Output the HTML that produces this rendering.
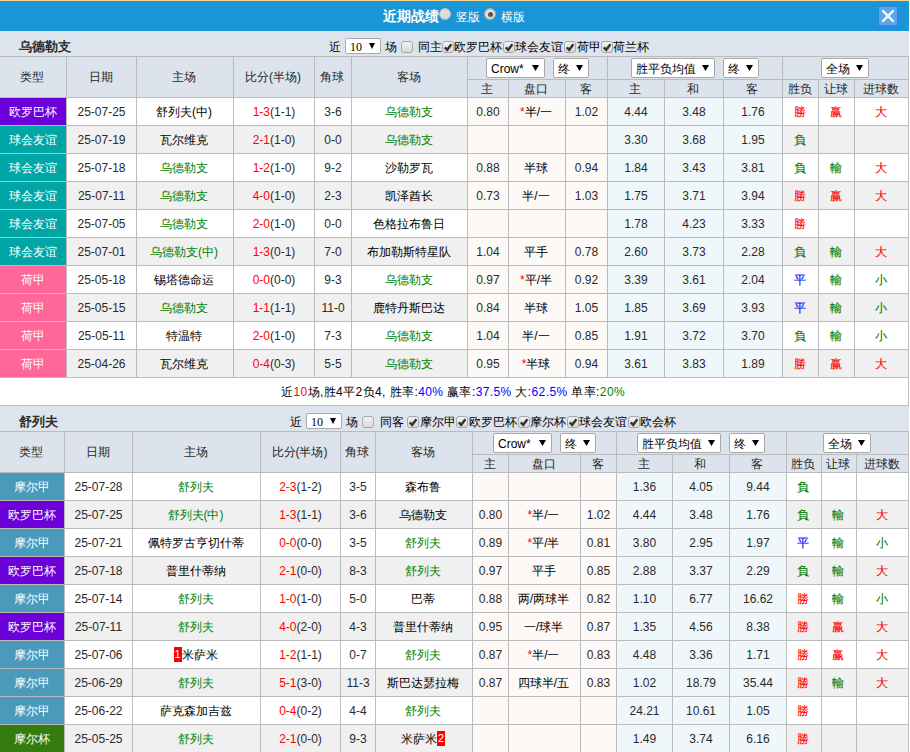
<!DOCTYPE html><html><head><meta charset="utf-8"><style>
*{margin:0;padding:0;box-sizing:border-box}
html,body{width:910px;height:752px;overflow:hidden;background:#fff}
body{position:relative;font-family:"Liberation Sans",sans-serif;font-size:12px;color:#000000}
body>div,body>svg{position:absolute}
.c{text-align:center;white-space:nowrap;overflow:visible}
.t{white-space:nowrap}
.sel{border:1px solid #a9a9a9;border-radius:2px;background:#fff;white-space:nowrap;color:#000;font-size:12px}
.sel .sl{position:absolute;left:4px;top:1px}
.sel .ar{position:absolute;right:5px;top:6px}
.cb{width:12px;height:12px;border:1px solid #a8a8a8;border-radius:3px;background:linear-gradient(#f2f2f2,#dadada)}
.sel.sm{font-family:'Liberation Serif',serif;font-size:12px}
.sel.sm .sl{left:4px;top:1px}
.sel.sm .ar{right:5px;top:4px}
.cb svg{position:absolute;left:0;top:0}
.rad{width:12px;height:12px;border-radius:50%;background:#dcdcdc;border:1px solid #b8b8b8}
.rad.on{background:#e4e4e4;border:1px solid #aaa;box-shadow:inset 0 0 0 1px #c8c8c8}
.rad.on div{position:absolute;left:2.5px;top:2.5px;width:5px;height:5px;border-radius:50%;background:#555}
.r{color:#ff0000} .g{color:#008000} .b{color:#0000ff}
.res{-webkit-text-stroke:0.12px currentColor}
.nb{display:inline-block;background:#f00;color:#fff;width:8px;text-align:center;height:15px;line-height:15px;vertical-align:1px;font-size:11px}
</style></head><body><div style="left:0px;top:0px;width:909px;height:1px;background:#fbd494;"></div>
<div style="left:0px;top:1px;width:909px;height:30px;background:#1a95d5;"></div>
<div class="t" style="left:383px;top:1px;height:30px;line-height:30px;color:#fff;font-weight:bold;font-size:14px;">近期战绩</div>
<div class="rad" style="left:439px;top:8px;"></div>
<div class="t" style="left:456px;top:2px;height:30px;line-height:30px;color:#fff;font-size:12px;">竖版</div>
<div class="rad on" style="left:484px;top:8px;"><div></div></div>
<div class="t" style="left:501px;top:2px;height:30px;line-height:30px;color:#fff;font-size:12px;">横版</div>
<div style="left:877px;top:5px;width:22px;height:22px;background:#2a8be6;"></div>
<div style="left:879px;top:7px;width:18px;height:18px;background:#5aa8ea;"></div>
<svg style="position:absolute;left:877px;top:5px" width="22" height="22" viewBox="0 0 22 22"><path d="M6 6 L16 16 M16 6 L6 16" stroke="#fff" stroke-width="2.2" stroke-linecap="round"/></svg>
<div style="left:0px;top:31px;width:909px;height:25px;background:#dde4ed;"></div>
<div class="t" style="left:19px;top:34px;height:25px;line-height:25px;font-weight:bold;font-size:13px;color:#2b2b2b;">乌德勒支</div>
<div class="t" style="left:329px;top:35px;height:25px;line-height:25px;">近</div>
<div class="sel sm" style="left:345px;top:38px;width:36px;height:16px;line-height:14px;"><span class="sl">10</span><svg class="ar" width="6" height="6" viewBox="0 0 6 6"><path d="M0 0H6L3 6Z" fill="#000"/></svg></div>
<div class="t" style="left:385px;top:35px;height:25px;line-height:25px;">场</div>
<div class="cb" style="left:401px;top:41px;"></div>
<div class="t" style="left:418px;top:35px;height:25px;line-height:25px;">同主</div>
<div class="cb" style="left:442px;top:41px;"><svg width="10" height="10" viewBox="0 0 10 10"><path d="M1.8 5.4 L4.2 7.8 L8.4 2.2" stroke="#333" stroke-width="2.4" fill="none"/></svg></div>
<div class="t" style="left:454px;top:35px;height:25px;line-height:25px;">欧罗巴杯</div>
<div class="cb" style="left:503px;top:41px;"><svg width="10" height="10" viewBox="0 0 10 10"><path d="M1.8 5.4 L4.2 7.8 L8.4 2.2" stroke="#333" stroke-width="2.4" fill="none"/></svg></div>
<div class="t" style="left:515px;top:35px;height:25px;line-height:25px;">球会友谊</div>
<div class="cb" style="left:564px;top:41px;"><svg width="10" height="10" viewBox="0 0 10 10"><path d="M1.8 5.4 L4.2 7.8 L8.4 2.2" stroke="#333" stroke-width="2.4" fill="none"/></svg></div>
<div class="t" style="left:577px;top:35px;height:25px;line-height:25px;">荷甲</div>
<div class="cb" style="left:601px;top:41px;"><svg width="10" height="10" viewBox="0 0 10 10"><path d="M1.8 5.4 L4.2 7.8 L8.4 2.2" stroke="#333" stroke-width="2.4" fill="none"/></svg></div>
<div class="t" style="left:613px;top:35px;height:25px;line-height:25px;">荷兰杯</div>
<div style="left:0px;top:56px;width:909px;height:41px;background:#dce3ec;"></div>
<div style="left:0px;top:56px;width:909px;height:1px;background:#bbbbbb;"></div>
<div style="left:0px;top:97px;width:909px;height:1px;background:#bbbbbb;"></div>
<div style="left:467px;top:79px;width:442px;height:1px;background:#bbbbbb;"></div>
<div style="left:66px;top:56px;width:1px;height:42px;background:#bbbbbb;"></div>
<div style="left:136px;top:56px;width:1px;height:42px;background:#bbbbbb;"></div>
<div style="left:233px;top:56px;width:1px;height:42px;background:#bbbbbb;"></div>
<div style="left:314px;top:56px;width:1px;height:42px;background:#bbbbbb;"></div>
<div style="left:351px;top:56px;width:1px;height:42px;background:#bbbbbb;"></div>
<div style="left:467px;top:56px;width:1px;height:42px;background:#bbbbbb;"></div>
<div style="left:508px;top:79px;width:1px;height:19px;background:#bbbbbb;"></div>
<div style="left:565px;top:79px;width:1px;height:19px;background:#bbbbbb;"></div>
<div style="left:607px;top:56px;width:1px;height:42px;background:#bbbbbb;"></div>
<div style="left:664px;top:79px;width:1px;height:19px;background:#bbbbbb;"></div>
<div style="left:723px;top:79px;width:1px;height:19px;background:#bbbbbb;"></div>
<div style="left:782px;top:56px;width:1px;height:42px;background:#bbbbbb;"></div>
<div style="left:818px;top:79px;width:1px;height:19px;background:#bbbbbb;"></div>
<div style="left:854px;top:79px;width:1px;height:19px;background:#bbbbbb;"></div>
<div style="left:908px;top:56px;width:1px;height:42px;background:#bbbbbb;"></div>
<div class="c" style="left:-1px;top:57px;width:66px;height:40px;line-height:40px;color:#262626;">类型</div>
<div class="c" style="left:66px;top:57px;width:69px;height:40px;line-height:40px;color:#262626;">日期</div>
<div class="c" style="left:136px;top:57px;width:96px;height:40px;line-height:40px;color:#262626;">主场</div>
<div class="c" style="left:233px;top:57px;width:80px;height:40px;line-height:40px;color:#262626;">比分(半场)</div>
<div class="c" style="left:314px;top:57px;width:36px;height:40px;line-height:40px;color:#262626;">角球</div>
<div class="c" style="left:351px;top:57px;width:115px;height:40px;line-height:40px;color:#262626;">客场</div>
<div class="c" style="left:467px;top:81px;width:40px;height:17px;line-height:17px;color:#262626;">主</div>
<div class="c" style="left:508px;top:81px;width:56px;height:17px;line-height:17px;color:#262626;">盘口</div>
<div class="c" style="left:565px;top:81px;width:41px;height:17px;line-height:17px;color:#262626;">客</div>
<div class="c" style="left:607px;top:81px;width:56px;height:17px;line-height:17px;color:#262626;">主</div>
<div class="c" style="left:664px;top:81px;width:58px;height:17px;line-height:17px;color:#262626;">和</div>
<div class="c" style="left:723px;top:81px;width:58px;height:17px;line-height:17px;color:#262626;">客</div>
<div class="c" style="left:782px;top:81px;width:35px;height:17px;line-height:17px;color:#262626;">胜负</div>
<div class="c" style="left:818px;top:81px;width:35px;height:17px;line-height:17px;color:#262626;">让球</div>
<div class="c" style="left:854px;top:81px;width:53px;height:17px;line-height:17px;color:#262626;">进球数</div>
<div class="sel" style="left:486px;top:58px;width:59px;height:20px;line-height:18px;"><span class="sl">Crow*</span><svg class="ar" width="7" height="6" viewBox="0 0 7 6"><path d="M0 0H7L3.5 6Z" fill="#000"/></svg></div>
<div class="sel" style="left:553px;top:58px;width:36px;height:20px;line-height:18px;"><span class="sl">终</span><svg class="ar" width="7" height="6" viewBox="0 0 7 6"><path d="M0 0H7L3.5 6Z" fill="#000"/></svg></div>
<div class="sel" style="left:631px;top:58px;width:84px;height:20px;line-height:18px;"><span class="sl">胜平负均值</span><svg class="ar" width="7" height="6" viewBox="0 0 7 6"><path d="M0 0H7L3.5 6Z" fill="#000"/></svg></div>
<div class="sel" style="left:723px;top:58px;width:36px;height:20px;line-height:18px;"><span class="sl">终</span><svg class="ar" width="7" height="6" viewBox="0 0 7 6"><path d="M0 0H7L3.5 6Z" fill="#000"/></svg></div>
<div class="sel" style="left:821px;top:58px;width:48px;height:20px;line-height:18px;"><span class="sl">全场</span><svg class="ar" width="7" height="6" viewBox="0 0 7 6"><path d="M0 0H7L3.5 6Z" fill="#000"/></svg></div>
<div style="left:0px;top:98px;width:909px;height:27px;background:#ffffff;"></div>
<div style="left:468px;top:98px;width:140px;height:27px;background:#fdf9f6;"></div>
<div style="left:608px;top:98px;width:175px;height:27px;background:#f0f7fb;"></div>
<div style="left:0px;top:98px;width:66px;height:27px;background:#6c00d8;"></div>
<div class="c" style="left:0px;top:99px;width:66px;height:27px;line-height:27px;color:#fff;">欧罗巴杯</div>
<div class="c" style="left:67px;top:99px;width:69px;height:27px;line-height:27px;color:#2a2a2a;">25-07-25</div>
<div class="c" style="left:136px;top:99px;width:96px;height:27px;line-height:27px;color:#000000;">舒列夫(中)</div>
<div class="c" style="left:234px;top:99px;width:80px;height:27px;line-height:27px;color:#2a2a2a;"><span class="r">1-3</span>(1-1)</div>
<div class="c" style="left:315px;top:99px;width:36px;height:27px;line-height:27px;color:#2a2a2a;">3-6</div>
<div class="c" style="left:351px;top:99px;width:115px;height:27px;line-height:27px;color:#000000;"><span class="g">乌德勒支</span></div>
<div class="c" style="left:468px;top:99px;width:40px;height:27px;line-height:27px;color:#2a2a2a;">0.80</div>
<div class="c" style="left:508px;top:99px;width:56px;height:27px;line-height:27px;color:#000000;"><span class="r">*</span>半/一</div>
<div class="c" style="left:566px;top:99px;width:41px;height:27px;line-height:27px;color:#2a2a2a;">1.02</div>
<div class="c" style="left:608px;top:99px;width:56px;height:27px;line-height:27px;color:#2a2a2a;">4.44</div>
<div class="c" style="left:665px;top:99px;width:58px;height:27px;line-height:27px;color:#2a2a2a;">3.48</div>
<div class="c" style="left:724px;top:99px;width:58px;height:27px;line-height:27px;color:#2a2a2a;">1.76</div>
<div class="c" style="left:782px;top:99px;width:35px;height:27px;line-height:27px;color:#000000;"><span class="r res">勝</span></div>
<div class="c" style="left:818px;top:99px;width:35px;height:27px;line-height:27px;color:#000000;"><span class="r res">赢</span></div>
<div class="c" style="left:854px;top:99px;width:53px;height:27px;line-height:27px;color:#000000;"><span class="r res">大</span></div>
<div style="left:0px;top:125px;width:909px;height:1px;background:#bbbbbb;"></div>
<div style="left:0px;top:126px;width:909px;height:27px;background:#f0f0f0;"></div>
<div style="left:468px;top:126px;width:140px;height:27px;background:#fdf9f6;"></div>
<div style="left:608px;top:126px;width:175px;height:27px;background:#f0f7fb;"></div>
<div style="left:0px;top:126px;width:66px;height:27px;background:#00a6a6;"></div>
<div class="c" style="left:0px;top:127px;width:66px;height:27px;line-height:27px;color:#fff;">球会友谊</div>
<div class="c" style="left:67px;top:127px;width:69px;height:27px;line-height:27px;color:#2a2a2a;">25-07-19</div>
<div class="c" style="left:136px;top:127px;width:96px;height:27px;line-height:27px;color:#000000;">瓦尔维克</div>
<div class="c" style="left:234px;top:127px;width:80px;height:27px;line-height:27px;color:#2a2a2a;"><span class="r">2-1</span>(1-0)</div>
<div class="c" style="left:315px;top:127px;width:36px;height:27px;line-height:27px;color:#2a2a2a;">0-0</div>
<div class="c" style="left:351px;top:127px;width:115px;height:27px;line-height:27px;color:#000000;"><span class="g">乌德勒支</span></div>
<div class="c" style="left:608px;top:127px;width:56px;height:27px;line-height:27px;color:#2a2a2a;">3.30</div>
<div class="c" style="left:665px;top:127px;width:58px;height:27px;line-height:27px;color:#2a2a2a;">3.68</div>
<div class="c" style="left:724px;top:127px;width:58px;height:27px;line-height:27px;color:#2a2a2a;">1.95</div>
<div class="c" style="left:782px;top:127px;width:35px;height:27px;line-height:27px;color:#000000;"><span class="g res">負</span></div>
<div style="left:0px;top:153px;width:909px;height:1px;background:#bbbbbb;"></div>
<div style="left:0px;top:154px;width:909px;height:27px;background:#ffffff;"></div>
<div style="left:468px;top:154px;width:140px;height:27px;background:#fdf9f6;"></div>
<div style="left:608px;top:154px;width:175px;height:27px;background:#f0f7fb;"></div>
<div style="left:0px;top:154px;width:66px;height:27px;background:#00a6a6;"></div>
<div class="c" style="left:0px;top:155px;width:66px;height:27px;line-height:27px;color:#fff;">球会友谊</div>
<div class="c" style="left:67px;top:155px;width:69px;height:27px;line-height:27px;color:#2a2a2a;">25-07-18</div>
<div class="c" style="left:136px;top:155px;width:96px;height:27px;line-height:27px;color:#000000;"><span class="g">乌德勒支</span></div>
<div class="c" style="left:234px;top:155px;width:80px;height:27px;line-height:27px;color:#2a2a2a;"><span class="r">1-2</span>(1-0)</div>
<div class="c" style="left:315px;top:155px;width:36px;height:27px;line-height:27px;color:#2a2a2a;">9-2</div>
<div class="c" style="left:351px;top:155px;width:115px;height:27px;line-height:27px;color:#000000;">沙勒罗瓦</div>
<div class="c" style="left:468px;top:155px;width:40px;height:27px;line-height:27px;color:#2a2a2a;">0.88</div>
<div class="c" style="left:508px;top:155px;width:56px;height:27px;line-height:27px;color:#000000;">半球</div>
<div class="c" style="left:566px;top:155px;width:41px;height:27px;line-height:27px;color:#2a2a2a;">0.94</div>
<div class="c" style="left:608px;top:155px;width:56px;height:27px;line-height:27px;color:#2a2a2a;">1.84</div>
<div class="c" style="left:665px;top:155px;width:58px;height:27px;line-height:27px;color:#2a2a2a;">3.43</div>
<div class="c" style="left:724px;top:155px;width:58px;height:27px;line-height:27px;color:#2a2a2a;">3.81</div>
<div class="c" style="left:782px;top:155px;width:35px;height:27px;line-height:27px;color:#000000;"><span class="g res">負</span></div>
<div class="c" style="left:818px;top:155px;width:35px;height:27px;line-height:27px;color:#000000;"><span class="g res">輸</span></div>
<div class="c" style="left:854px;top:155px;width:53px;height:27px;line-height:27px;color:#000000;"><span class="r res">大</span></div>
<div style="left:0px;top:181px;width:909px;height:1px;background:#bbbbbb;"></div>
<div style="left:0px;top:182px;width:909px;height:27px;background:#f0f0f0;"></div>
<div style="left:468px;top:182px;width:140px;height:27px;background:#fdf9f6;"></div>
<div style="left:608px;top:182px;width:175px;height:27px;background:#f0f7fb;"></div>
<div style="left:0px;top:182px;width:66px;height:27px;background:#00a6a6;"></div>
<div class="c" style="left:0px;top:183px;width:66px;height:27px;line-height:27px;color:#fff;">球会友谊</div>
<div class="c" style="left:67px;top:183px;width:69px;height:27px;line-height:27px;color:#2a2a2a;">25-07-11</div>
<div class="c" style="left:136px;top:183px;width:96px;height:27px;line-height:27px;color:#000000;"><span class="g">乌德勒支</span></div>
<div class="c" style="left:234px;top:183px;width:80px;height:27px;line-height:27px;color:#2a2a2a;"><span class="r">4-0</span>(1-0)</div>
<div class="c" style="left:315px;top:183px;width:36px;height:27px;line-height:27px;color:#2a2a2a;">2-3</div>
<div class="c" style="left:351px;top:183px;width:115px;height:27px;line-height:27px;color:#000000;">凯泽酋长</div>
<div class="c" style="left:468px;top:183px;width:40px;height:27px;line-height:27px;color:#2a2a2a;">0.73</div>
<div class="c" style="left:508px;top:183px;width:56px;height:27px;line-height:27px;color:#000000;">半/一</div>
<div class="c" style="left:566px;top:183px;width:41px;height:27px;line-height:27px;color:#2a2a2a;">1.03</div>
<div class="c" style="left:608px;top:183px;width:56px;height:27px;line-height:27px;color:#2a2a2a;">1.75</div>
<div class="c" style="left:665px;top:183px;width:58px;height:27px;line-height:27px;color:#2a2a2a;">3.71</div>
<div class="c" style="left:724px;top:183px;width:58px;height:27px;line-height:27px;color:#2a2a2a;">3.94</div>
<div class="c" style="left:782px;top:183px;width:35px;height:27px;line-height:27px;color:#000000;"><span class="r res">勝</span></div>
<div class="c" style="left:818px;top:183px;width:35px;height:27px;line-height:27px;color:#000000;"><span class="r res">赢</span></div>
<div class="c" style="left:854px;top:183px;width:53px;height:27px;line-height:27px;color:#000000;"><span class="r res">大</span></div>
<div style="left:0px;top:209px;width:909px;height:1px;background:#bbbbbb;"></div>
<div style="left:0px;top:210px;width:909px;height:27px;background:#ffffff;"></div>
<div style="left:468px;top:210px;width:140px;height:27px;background:#fdf9f6;"></div>
<div style="left:608px;top:210px;width:175px;height:27px;background:#f0f7fb;"></div>
<div style="left:0px;top:210px;width:66px;height:27px;background:#00a6a6;"></div>
<div class="c" style="left:0px;top:211px;width:66px;height:27px;line-height:27px;color:#fff;">球会友谊</div>
<div class="c" style="left:67px;top:211px;width:69px;height:27px;line-height:27px;color:#2a2a2a;">25-07-05</div>
<div class="c" style="left:136px;top:211px;width:96px;height:27px;line-height:27px;color:#000000;"><span class="g">乌德勒支</span></div>
<div class="c" style="left:234px;top:211px;width:80px;height:27px;line-height:27px;color:#2a2a2a;"><span class="r">2-0</span>(1-0)</div>
<div class="c" style="left:315px;top:211px;width:36px;height:27px;line-height:27px;color:#2a2a2a;">0-0</div>
<div class="c" style="left:351px;top:211px;width:115px;height:27px;line-height:27px;color:#000000;">色格拉布鲁日</div>
<div class="c" style="left:608px;top:211px;width:56px;height:27px;line-height:27px;color:#2a2a2a;">1.78</div>
<div class="c" style="left:665px;top:211px;width:58px;height:27px;line-height:27px;color:#2a2a2a;">4.23</div>
<div class="c" style="left:724px;top:211px;width:58px;height:27px;line-height:27px;color:#2a2a2a;">3.33</div>
<div class="c" style="left:782px;top:211px;width:35px;height:27px;line-height:27px;color:#000000;"><span class="r res">勝</span></div>
<div style="left:0px;top:237px;width:909px;height:1px;background:#bbbbbb;"></div>
<div style="left:0px;top:238px;width:909px;height:27px;background:#f0f0f0;"></div>
<div style="left:468px;top:238px;width:140px;height:27px;background:#fdf9f6;"></div>
<div style="left:608px;top:238px;width:175px;height:27px;background:#f0f7fb;"></div>
<div style="left:0px;top:238px;width:66px;height:27px;background:#00a6a6;"></div>
<div class="c" style="left:0px;top:239px;width:66px;height:27px;line-height:27px;color:#fff;">球会友谊</div>
<div class="c" style="left:67px;top:239px;width:69px;height:27px;line-height:27px;color:#2a2a2a;">25-07-01</div>
<div class="c" style="left:136px;top:239px;width:96px;height:27px;line-height:27px;color:#000000;"><span class="g">乌德勒支(中)</span></div>
<div class="c" style="left:234px;top:239px;width:80px;height:27px;line-height:27px;color:#2a2a2a;"><span class="r">1-3</span>(0-1)</div>
<div class="c" style="left:315px;top:239px;width:36px;height:27px;line-height:27px;color:#2a2a2a;">7-0</div>
<div class="c" style="left:351px;top:239px;width:115px;height:27px;line-height:27px;color:#000000;">布加勒斯特星队</div>
<div class="c" style="left:468px;top:239px;width:40px;height:27px;line-height:27px;color:#2a2a2a;">1.04</div>
<div class="c" style="left:508px;top:239px;width:56px;height:27px;line-height:27px;color:#000000;">平手</div>
<div class="c" style="left:566px;top:239px;width:41px;height:27px;line-height:27px;color:#2a2a2a;">0.78</div>
<div class="c" style="left:608px;top:239px;width:56px;height:27px;line-height:27px;color:#2a2a2a;">2.60</div>
<div class="c" style="left:665px;top:239px;width:58px;height:27px;line-height:27px;color:#2a2a2a;">3.73</div>
<div class="c" style="left:724px;top:239px;width:58px;height:27px;line-height:27px;color:#2a2a2a;">2.28</div>
<div class="c" style="left:782px;top:239px;width:35px;height:27px;line-height:27px;color:#000000;"><span class="g res">負</span></div>
<div class="c" style="left:818px;top:239px;width:35px;height:27px;line-height:27px;color:#000000;"><span class="g res">輸</span></div>
<div class="c" style="left:854px;top:239px;width:53px;height:27px;line-height:27px;color:#000000;"><span class="r res">大</span></div>
<div style="left:0px;top:265px;width:909px;height:1px;background:#bbbbbb;"></div>
<div style="left:0px;top:266px;width:909px;height:27px;background:#ffffff;"></div>
<div style="left:468px;top:266px;width:140px;height:27px;background:#fdf9f6;"></div>
<div style="left:608px;top:266px;width:175px;height:27px;background:#f0f7fb;"></div>
<div style="left:0px;top:266px;width:66px;height:27px;background:#ff6699;"></div>
<div class="c" style="left:0px;top:267px;width:66px;height:27px;line-height:27px;color:#fff;">荷甲</div>
<div class="c" style="left:67px;top:267px;width:69px;height:27px;line-height:27px;color:#2a2a2a;">25-05-18</div>
<div class="c" style="left:136px;top:267px;width:96px;height:27px;line-height:27px;color:#000000;">锡塔德命运</div>
<div class="c" style="left:234px;top:267px;width:80px;height:27px;line-height:27px;color:#2a2a2a;"><span class="r">0-0</span>(0-0)</div>
<div class="c" style="left:315px;top:267px;width:36px;height:27px;line-height:27px;color:#2a2a2a;">9-3</div>
<div class="c" style="left:351px;top:267px;width:115px;height:27px;line-height:27px;color:#000000;"><span class="g">乌德勒支</span></div>
<div class="c" style="left:468px;top:267px;width:40px;height:27px;line-height:27px;color:#2a2a2a;">0.97</div>
<div class="c" style="left:508px;top:267px;width:56px;height:27px;line-height:27px;color:#000000;"><span class="r">*</span>平/半</div>
<div class="c" style="left:566px;top:267px;width:41px;height:27px;line-height:27px;color:#2a2a2a;">0.92</div>
<div class="c" style="left:608px;top:267px;width:56px;height:27px;line-height:27px;color:#2a2a2a;">3.39</div>
<div class="c" style="left:665px;top:267px;width:58px;height:27px;line-height:27px;color:#2a2a2a;">3.61</div>
<div class="c" style="left:724px;top:267px;width:58px;height:27px;line-height:27px;color:#2a2a2a;">2.04</div>
<div class="c" style="left:782px;top:267px;width:35px;height:27px;line-height:27px;color:#000000;"><span class="b res">平</span></div>
<div class="c" style="left:818px;top:267px;width:35px;height:27px;line-height:27px;color:#000000;"><span class="g res">輸</span></div>
<div class="c" style="left:854px;top:267px;width:53px;height:27px;line-height:27px;color:#000000;"><span class="g res">小</span></div>
<div style="left:0px;top:293px;width:909px;height:1px;background:#bbbbbb;"></div>
<div style="left:0px;top:294px;width:909px;height:27px;background:#f0f0f0;"></div>
<div style="left:468px;top:294px;width:140px;height:27px;background:#fdf9f6;"></div>
<div style="left:608px;top:294px;width:175px;height:27px;background:#f0f7fb;"></div>
<div style="left:0px;top:294px;width:66px;height:27px;background:#ff6699;"></div>
<div class="c" style="left:0px;top:295px;width:66px;height:27px;line-height:27px;color:#fff;">荷甲</div>
<div class="c" style="left:67px;top:295px;width:69px;height:27px;line-height:27px;color:#2a2a2a;">25-05-15</div>
<div class="c" style="left:136px;top:295px;width:96px;height:27px;line-height:27px;color:#000000;"><span class="g">乌德勒支</span></div>
<div class="c" style="left:234px;top:295px;width:80px;height:27px;line-height:27px;color:#2a2a2a;"><span class="r">1-1</span>(1-1)</div>
<div class="c" style="left:315px;top:295px;width:36px;height:27px;line-height:27px;color:#2a2a2a;">11-0</div>
<div class="c" style="left:351px;top:295px;width:115px;height:27px;line-height:27px;color:#000000;">鹿特丹斯巴达</div>
<div class="c" style="left:468px;top:295px;width:40px;height:27px;line-height:27px;color:#2a2a2a;">0.84</div>
<div class="c" style="left:508px;top:295px;width:56px;height:27px;line-height:27px;color:#000000;">半球</div>
<div class="c" style="left:566px;top:295px;width:41px;height:27px;line-height:27px;color:#2a2a2a;">1.05</div>
<div class="c" style="left:608px;top:295px;width:56px;height:27px;line-height:27px;color:#2a2a2a;">1.85</div>
<div class="c" style="left:665px;top:295px;width:58px;height:27px;line-height:27px;color:#2a2a2a;">3.69</div>
<div class="c" style="left:724px;top:295px;width:58px;height:27px;line-height:27px;color:#2a2a2a;">3.93</div>
<div class="c" style="left:782px;top:295px;width:35px;height:27px;line-height:27px;color:#000000;"><span class="b res">平</span></div>
<div class="c" style="left:818px;top:295px;width:35px;height:27px;line-height:27px;color:#000000;"><span class="g res">輸</span></div>
<div class="c" style="left:854px;top:295px;width:53px;height:27px;line-height:27px;color:#000000;"><span class="g res">小</span></div>
<div style="left:0px;top:321px;width:909px;height:1px;background:#bbbbbb;"></div>
<div style="left:0px;top:322px;width:909px;height:27px;background:#ffffff;"></div>
<div style="left:468px;top:322px;width:140px;height:27px;background:#fdf9f6;"></div>
<div style="left:608px;top:322px;width:175px;height:27px;background:#f0f7fb;"></div>
<div style="left:0px;top:322px;width:66px;height:27px;background:#ff6699;"></div>
<div class="c" style="left:0px;top:323px;width:66px;height:27px;line-height:27px;color:#fff;">荷甲</div>
<div class="c" style="left:67px;top:323px;width:69px;height:27px;line-height:27px;color:#2a2a2a;">25-05-11</div>
<div class="c" style="left:136px;top:323px;width:96px;height:27px;line-height:27px;color:#000000;">特温特</div>
<div class="c" style="left:234px;top:323px;width:80px;height:27px;line-height:27px;color:#2a2a2a;"><span class="r">2-0</span>(1-0)</div>
<div class="c" style="left:315px;top:323px;width:36px;height:27px;line-height:27px;color:#2a2a2a;">7-3</div>
<div class="c" style="left:351px;top:323px;width:115px;height:27px;line-height:27px;color:#000000;"><span class="g">乌德勒支</span></div>
<div class="c" style="left:468px;top:323px;width:40px;height:27px;line-height:27px;color:#2a2a2a;">1.04</div>
<div class="c" style="left:508px;top:323px;width:56px;height:27px;line-height:27px;color:#000000;">半/一</div>
<div class="c" style="left:566px;top:323px;width:41px;height:27px;line-height:27px;color:#2a2a2a;">0.85</div>
<div class="c" style="left:608px;top:323px;width:56px;height:27px;line-height:27px;color:#2a2a2a;">1.91</div>
<div class="c" style="left:665px;top:323px;width:58px;height:27px;line-height:27px;color:#2a2a2a;">3.72</div>
<div class="c" style="left:724px;top:323px;width:58px;height:27px;line-height:27px;color:#2a2a2a;">3.70</div>
<div class="c" style="left:782px;top:323px;width:35px;height:27px;line-height:27px;color:#000000;"><span class="g res">負</span></div>
<div class="c" style="left:818px;top:323px;width:35px;height:27px;line-height:27px;color:#000000;"><span class="g res">輸</span></div>
<div class="c" style="left:854px;top:323px;width:53px;height:27px;line-height:27px;color:#000000;"><span class="g res">小</span></div>
<div style="left:0px;top:349px;width:909px;height:1px;background:#bbbbbb;"></div>
<div style="left:0px;top:350px;width:909px;height:27px;background:#f0f0f0;"></div>
<div style="left:468px;top:350px;width:140px;height:27px;background:#fdf9f6;"></div>
<div style="left:608px;top:350px;width:175px;height:27px;background:#f0f7fb;"></div>
<div style="left:0px;top:350px;width:66px;height:27px;background:#ff6699;"></div>
<div class="c" style="left:0px;top:351px;width:66px;height:27px;line-height:27px;color:#fff;">荷甲</div>
<div class="c" style="left:67px;top:351px;width:69px;height:27px;line-height:27px;color:#2a2a2a;">25-04-26</div>
<div class="c" style="left:136px;top:351px;width:96px;height:27px;line-height:27px;color:#000000;">瓦尔维克</div>
<div class="c" style="left:234px;top:351px;width:80px;height:27px;line-height:27px;color:#2a2a2a;"><span class="r">0-4</span>(0-3)</div>
<div class="c" style="left:315px;top:351px;width:36px;height:27px;line-height:27px;color:#2a2a2a;">5-5</div>
<div class="c" style="left:351px;top:351px;width:115px;height:27px;line-height:27px;color:#000000;"><span class="g">乌德勒支</span></div>
<div class="c" style="left:468px;top:351px;width:40px;height:27px;line-height:27px;color:#2a2a2a;">0.95</div>
<div class="c" style="left:508px;top:351px;width:56px;height:27px;line-height:27px;color:#000000;"><span class="r">*</span>半球</div>
<div class="c" style="left:566px;top:351px;width:41px;height:27px;line-height:27px;color:#2a2a2a;">0.94</div>
<div class="c" style="left:608px;top:351px;width:56px;height:27px;line-height:27px;color:#2a2a2a;">3.61</div>
<div class="c" style="left:665px;top:351px;width:58px;height:27px;line-height:27px;color:#2a2a2a;">3.83</div>
<div class="c" style="left:724px;top:351px;width:58px;height:27px;line-height:27px;color:#2a2a2a;">1.89</div>
<div class="c" style="left:782px;top:351px;width:35px;height:27px;line-height:27px;color:#000000;"><span class="r res">勝</span></div>
<div class="c" style="left:818px;top:351px;width:35px;height:27px;line-height:27px;color:#000000;"><span class="r res">赢</span></div>
<div class="c" style="left:854px;top:351px;width:53px;height:27px;line-height:27px;color:#000000;"><span class="r res">大</span></div>
<div style="left:0px;top:377px;width:909px;height:1px;background:#bbbbbb;"></div>
<div style="left:66px;top:97px;width:1px;height:281px;background:#bbbbbb;"></div>
<div style="left:136px;top:97px;width:1px;height:281px;background:#bbbbbb;"></div>
<div style="left:233px;top:97px;width:1px;height:281px;background:#bbbbbb;"></div>
<div style="left:314px;top:97px;width:1px;height:281px;background:#bbbbbb;"></div>
<div style="left:351px;top:97px;width:1px;height:281px;background:#bbbbbb;"></div>
<div style="left:467px;top:97px;width:1px;height:281px;background:#bbbbbb;"></div>
<div style="left:508px;top:97px;width:1px;height:281px;background:#bbbbbb;"></div>
<div style="left:565px;top:97px;width:1px;height:281px;background:#bbbbbb;"></div>
<div style="left:607px;top:97px;width:1px;height:281px;background:#bbbbbb;"></div>
<div style="left:664px;top:97px;width:1px;height:281px;background:#bbbbbb;"></div>
<div style="left:723px;top:97px;width:1px;height:281px;background:#bbbbbb;"></div>
<div style="left:782px;top:97px;width:1px;height:281px;background:#bbbbbb;"></div>
<div style="left:818px;top:97px;width:1px;height:281px;background:#bbbbbb;"></div>
<div style="left:854px;top:97px;width:1px;height:281px;background:#bbbbbb;"></div>
<div style="left:908px;top:97px;width:1px;height:281px;background:#bbbbbb;"></div>
<div style="left:0px;top:378px;width:909px;height:27px;background:#fff;"></div>
<div class="t" style="left:281px;top:379px;height:27px;line-height:27px;"><span style="letter-spacing:0.4px">近<span class="r">10</span>场,胜4平2负4, 胜率:<span class="b">40%</span> 赢率:<span class="b">37.5%</span> 大:<span class="b">62.5%</span> 单率:<span class="g">20%</span></span></div>
<div style="left:908px;top:378px;width:1px;height:28px;background:#bbbbbb;"></div>
<div style="left:0px;top:405px;width:909px;height:1px;background:#bbbbbb;"></div>
<div style="left:0px;top:406px;width:909px;height:25px;background:#dde4ed;"></div>
<div class="t" style="left:19px;top:409px;height:25px;line-height:25px;font-weight:bold;font-size:13px;color:#2b2b2b;">舒列夫</div>
<div class="t" style="left:290px;top:410px;height:25px;line-height:25px;">近</div>
<div class="sel sm" style="left:306px;top:413px;width:36px;height:16px;line-height:14px;"><span class="sl">10</span><svg class="ar" width="6" height="6" viewBox="0 0 6 6"><path d="M0 0H6L3 6Z" fill="#000"/></svg></div>
<div class="t" style="left:346px;top:410px;height:25px;line-height:25px;">场</div>
<div class="cb" style="left:362px;top:416px;"></div>
<div class="t" style="left:380px;top:410px;height:25px;line-height:25px;">同客</div>
<div class="cb" style="left:407px;top:416px;"><svg width="10" height="10" viewBox="0 0 10 10"><path d="M1.8 5.4 L4.2 7.8 L8.4 2.2" stroke="#333" stroke-width="2.4" fill="none"/></svg></div>
<div class="t" style="left:420px;top:410px;height:25px;line-height:25px;">摩尔甲</div>
<div class="cb" style="left:456px;top:416px;"><svg width="10" height="10" viewBox="0 0 10 10"><path d="M1.8 5.4 L4.2 7.8 L8.4 2.2" stroke="#333" stroke-width="2.4" fill="none"/></svg></div>
<div class="t" style="left:469px;top:410px;height:25px;line-height:25px;">欧罗巴杯</div>
<div class="cb" style="left:518px;top:416px;"><svg width="10" height="10" viewBox="0 0 10 10"><path d="M1.8 5.4 L4.2 7.8 L8.4 2.2" stroke="#333" stroke-width="2.4" fill="none"/></svg></div>
<div class="t" style="left:530px;top:410px;height:25px;line-height:25px;">摩尔杯</div>
<div class="cb" style="left:567px;top:416px;"><svg width="10" height="10" viewBox="0 0 10 10"><path d="M1.8 5.4 L4.2 7.8 L8.4 2.2" stroke="#333" stroke-width="2.4" fill="none"/></svg></div>
<div class="t" style="left:579px;top:410px;height:25px;line-height:25px;">球会友谊</div>
<div class="cb" style="left:628px;top:416px;"><svg width="10" height="10" viewBox="0 0 10 10"><path d="M1.8 5.4 L4.2 7.8 L8.4 2.2" stroke="#333" stroke-width="2.4" fill="none"/></svg></div>
<div class="t" style="left:640px;top:410px;height:25px;line-height:25px;">欧会杯</div>
<div style="left:0px;top:431px;width:909px;height:41px;background:#dce3ec;"></div>
<div style="left:0px;top:431px;width:909px;height:1px;background:#bbbbbb;"></div>
<div style="left:0px;top:472px;width:909px;height:1px;background:#bbbbbb;"></div>
<div style="left:472px;top:454px;width:437px;height:1px;background:#bbbbbb;"></div>
<div style="left:64px;top:431px;width:1px;height:42px;background:#bbbbbb;"></div>
<div style="left:132px;top:431px;width:1px;height:42px;background:#bbbbbb;"></div>
<div style="left:260px;top:431px;width:1px;height:42px;background:#bbbbbb;"></div>
<div style="left:340px;top:431px;width:1px;height:42px;background:#bbbbbb;"></div>
<div style="left:375px;top:431px;width:1px;height:42px;background:#bbbbbb;"></div>
<div style="left:472px;top:431px;width:1px;height:42px;background:#bbbbbb;"></div>
<div style="left:508px;top:454px;width:1px;height:19px;background:#bbbbbb;"></div>
<div style="left:580px;top:454px;width:1px;height:19px;background:#bbbbbb;"></div>
<div style="left:616px;top:431px;width:1px;height:42px;background:#bbbbbb;"></div>
<div style="left:672px;top:454px;width:1px;height:19px;background:#bbbbbb;"></div>
<div style="left:729px;top:454px;width:1px;height:19px;background:#bbbbbb;"></div>
<div style="left:786px;top:431px;width:1px;height:42px;background:#bbbbbb;"></div>
<div style="left:821px;top:454px;width:1px;height:19px;background:#bbbbbb;"></div>
<div style="left:856px;top:454px;width:1px;height:19px;background:#bbbbbb;"></div>
<div style="left:908px;top:431px;width:1px;height:42px;background:#bbbbbb;"></div>
<div class="c" style="left:-1px;top:432px;width:64px;height:40px;line-height:40px;color:#262626;">类型</div>
<div class="c" style="left:64px;top:432px;width:67px;height:40px;line-height:40px;color:#262626;">日期</div>
<div class="c" style="left:132px;top:432px;width:127px;height:40px;line-height:40px;color:#262626;">主场</div>
<div class="c" style="left:260px;top:432px;width:79px;height:40px;line-height:40px;color:#262626;">比分(半场)</div>
<div class="c" style="left:340px;top:432px;width:34px;height:40px;line-height:40px;color:#262626;">角球</div>
<div class="c" style="left:375px;top:432px;width:96px;height:40px;line-height:40px;color:#262626;">客场</div>
<div class="c" style="left:472px;top:456px;width:35px;height:17px;line-height:17px;color:#262626;">主</div>
<div class="c" style="left:508px;top:456px;width:71px;height:17px;line-height:17px;color:#262626;">盘口</div>
<div class="c" style="left:580px;top:456px;width:35px;height:17px;line-height:17px;color:#262626;">客</div>
<div class="c" style="left:616px;top:456px;width:55px;height:17px;line-height:17px;color:#262626;">主</div>
<div class="c" style="left:672px;top:456px;width:56px;height:17px;line-height:17px;color:#262626;">和</div>
<div class="c" style="left:729px;top:456px;width:56px;height:17px;line-height:17px;color:#262626;">客</div>
<div class="c" style="left:786px;top:456px;width:34px;height:17px;line-height:17px;color:#262626;">胜负</div>
<div class="c" style="left:821px;top:456px;width:34px;height:17px;line-height:17px;color:#262626;">让球</div>
<div class="c" style="left:856px;top:456px;width:51px;height:17px;line-height:17px;color:#262626;">进球数</div>
<div class="sel" style="left:493px;top:433px;width:59px;height:20px;line-height:18px;"><span class="sl">Crow*</span><svg class="ar" width="7" height="6" viewBox="0 0 7 6"><path d="M0 0H7L3.5 6Z" fill="#000"/></svg></div>
<div class="sel" style="left:560px;top:433px;width:36px;height:20px;line-height:18px;"><span class="sl">终</span><svg class="ar" width="7" height="6" viewBox="0 0 7 6"><path d="M0 0H7L3.5 6Z" fill="#000"/></svg></div>
<div class="sel" style="left:637px;top:433px;width:84px;height:20px;line-height:18px;"><span class="sl">胜平负均值</span><svg class="ar" width="7" height="6" viewBox="0 0 7 6"><path d="M0 0H7L3.5 6Z" fill="#000"/></svg></div>
<div class="sel" style="left:729px;top:433px;width:36px;height:20px;line-height:18px;"><span class="sl">终</span><svg class="ar" width="7" height="6" viewBox="0 0 7 6"><path d="M0 0H7L3.5 6Z" fill="#000"/></svg></div>
<div class="sel" style="left:823px;top:433px;width:48px;height:20px;line-height:18px;"><span class="sl">全场</span><svg class="ar" width="7" height="6" viewBox="0 0 7 6"><path d="M0 0H7L3.5 6Z" fill="#000"/></svg></div>
<div style="left:0px;top:473px;width:909px;height:27px;background:#ffffff;"></div>
<div style="left:473px;top:473px;width:144px;height:27px;background:#fdf9f6;"></div>
<div style="left:617px;top:473px;width:170px;height:27px;background:#f0f7fb;"></div>
<div style="left:0px;top:473px;width:64px;height:27px;background:#4a9abb;"></div>
<div class="c" style="left:0px;top:474px;width:64px;height:27px;line-height:27px;color:#fff;">摩尔甲</div>
<div class="c" style="left:65px;top:474px;width:67px;height:27px;line-height:27px;color:#2a2a2a;">25-07-28</div>
<div class="c" style="left:132px;top:474px;width:127px;height:27px;line-height:27px;color:#000000;"><span class="g">舒列夫</span></div>
<div class="c" style="left:261px;top:474px;width:79px;height:27px;line-height:27px;color:#2a2a2a;"><span class="r">2-3</span>(1-2)</div>
<div class="c" style="left:341px;top:474px;width:34px;height:27px;line-height:27px;color:#2a2a2a;">3-5</div>
<div class="c" style="left:375px;top:474px;width:96px;height:27px;line-height:27px;color:#000000;">森布鲁</div>
<div class="c" style="left:617px;top:474px;width:55px;height:27px;line-height:27px;color:#2a2a2a;">1.36</div>
<div class="c" style="left:673px;top:474px;width:56px;height:27px;line-height:27px;color:#2a2a2a;">4.05</div>
<div class="c" style="left:730px;top:474px;width:56px;height:27px;line-height:27px;color:#2a2a2a;">9.44</div>
<div class="c" style="left:786px;top:474px;width:34px;height:27px;line-height:27px;color:#000000;"><span class="g res">負</span></div>
<div style="left:0px;top:500px;width:909px;height:1px;background:#bbbbbb;"></div>
<div style="left:0px;top:501px;width:909px;height:27px;background:#f0f0f0;"></div>
<div style="left:473px;top:501px;width:144px;height:27px;background:#fdf9f6;"></div>
<div style="left:617px;top:501px;width:170px;height:27px;background:#f0f7fb;"></div>
<div style="left:0px;top:501px;width:64px;height:27px;background:#6c00d8;"></div>
<div class="c" style="left:0px;top:502px;width:64px;height:27px;line-height:27px;color:#fff;">欧罗巴杯</div>
<div class="c" style="left:65px;top:502px;width:67px;height:27px;line-height:27px;color:#2a2a2a;">25-07-25</div>
<div class="c" style="left:132px;top:502px;width:127px;height:27px;line-height:27px;color:#000000;"><span class="g">舒列夫(中)</span></div>
<div class="c" style="left:261px;top:502px;width:79px;height:27px;line-height:27px;color:#2a2a2a;"><span class="r">1-3</span>(1-1)</div>
<div class="c" style="left:341px;top:502px;width:34px;height:27px;line-height:27px;color:#2a2a2a;">3-6</div>
<div class="c" style="left:375px;top:502px;width:96px;height:27px;line-height:27px;color:#000000;">乌德勒支</div>
<div class="c" style="left:473px;top:502px;width:35px;height:27px;line-height:27px;color:#2a2a2a;">0.80</div>
<div class="c" style="left:508px;top:502px;width:71px;height:27px;line-height:27px;color:#000000;"><span class="r">*</span>半/一</div>
<div class="c" style="left:581px;top:502px;width:35px;height:27px;line-height:27px;color:#2a2a2a;">1.02</div>
<div class="c" style="left:617px;top:502px;width:55px;height:27px;line-height:27px;color:#2a2a2a;">4.44</div>
<div class="c" style="left:673px;top:502px;width:56px;height:27px;line-height:27px;color:#2a2a2a;">3.48</div>
<div class="c" style="left:730px;top:502px;width:56px;height:27px;line-height:27px;color:#2a2a2a;">1.76</div>
<div class="c" style="left:786px;top:502px;width:34px;height:27px;line-height:27px;color:#000000;"><span class="g res">負</span></div>
<div class="c" style="left:821px;top:502px;width:34px;height:27px;line-height:27px;color:#000000;"><span class="g res">輸</span></div>
<div class="c" style="left:856px;top:502px;width:51px;height:27px;line-height:27px;color:#000000;"><span class="r res">大</span></div>
<div style="left:0px;top:528px;width:909px;height:1px;background:#bbbbbb;"></div>
<div style="left:0px;top:529px;width:909px;height:27px;background:#ffffff;"></div>
<div style="left:473px;top:529px;width:144px;height:27px;background:#fdf9f6;"></div>
<div style="left:617px;top:529px;width:170px;height:27px;background:#f0f7fb;"></div>
<div style="left:0px;top:529px;width:64px;height:27px;background:#4a9abb;"></div>
<div class="c" style="left:0px;top:530px;width:64px;height:27px;line-height:27px;color:#fff;">摩尔甲</div>
<div class="c" style="left:65px;top:530px;width:67px;height:27px;line-height:27px;color:#2a2a2a;">25-07-21</div>
<div class="c" style="left:132px;top:530px;width:127px;height:27px;line-height:27px;color:#000000;">佩特罗古亨切什蒂</div>
<div class="c" style="left:261px;top:530px;width:79px;height:27px;line-height:27px;color:#2a2a2a;"><span class="r">0-0</span>(0-0)</div>
<div class="c" style="left:341px;top:530px;width:34px;height:27px;line-height:27px;color:#2a2a2a;">3-5</div>
<div class="c" style="left:375px;top:530px;width:96px;height:27px;line-height:27px;color:#000000;"><span class="g">舒列夫</span></div>
<div class="c" style="left:473px;top:530px;width:35px;height:27px;line-height:27px;color:#2a2a2a;">0.89</div>
<div class="c" style="left:508px;top:530px;width:71px;height:27px;line-height:27px;color:#000000;"><span class="r">*</span>平/半</div>
<div class="c" style="left:581px;top:530px;width:35px;height:27px;line-height:27px;color:#2a2a2a;">0.81</div>
<div class="c" style="left:617px;top:530px;width:55px;height:27px;line-height:27px;color:#2a2a2a;">3.80</div>
<div class="c" style="left:673px;top:530px;width:56px;height:27px;line-height:27px;color:#2a2a2a;">2.95</div>
<div class="c" style="left:730px;top:530px;width:56px;height:27px;line-height:27px;color:#2a2a2a;">1.97</div>
<div class="c" style="left:786px;top:530px;width:34px;height:27px;line-height:27px;color:#000000;"><span class="b res">平</span></div>
<div class="c" style="left:821px;top:530px;width:34px;height:27px;line-height:27px;color:#000000;"><span class="g res">輸</span></div>
<div class="c" style="left:856px;top:530px;width:51px;height:27px;line-height:27px;color:#000000;"><span class="g res">小</span></div>
<div style="left:0px;top:556px;width:909px;height:1px;background:#bbbbbb;"></div>
<div style="left:0px;top:557px;width:909px;height:27px;background:#f0f0f0;"></div>
<div style="left:473px;top:557px;width:144px;height:27px;background:#fdf9f6;"></div>
<div style="left:617px;top:557px;width:170px;height:27px;background:#f0f7fb;"></div>
<div style="left:0px;top:557px;width:64px;height:27px;background:#6c00d8;"></div>
<div class="c" style="left:0px;top:558px;width:64px;height:27px;line-height:27px;color:#fff;">欧罗巴杯</div>
<div class="c" style="left:65px;top:558px;width:67px;height:27px;line-height:27px;color:#2a2a2a;">25-07-18</div>
<div class="c" style="left:132px;top:558px;width:127px;height:27px;line-height:27px;color:#000000;">普里什蒂纳</div>
<div class="c" style="left:261px;top:558px;width:79px;height:27px;line-height:27px;color:#2a2a2a;"><span class="r">2-1</span>(0-0)</div>
<div class="c" style="left:341px;top:558px;width:34px;height:27px;line-height:27px;color:#2a2a2a;">8-3</div>
<div class="c" style="left:375px;top:558px;width:96px;height:27px;line-height:27px;color:#000000;"><span class="g">舒列夫</span></div>
<div class="c" style="left:473px;top:558px;width:35px;height:27px;line-height:27px;color:#2a2a2a;">0.97</div>
<div class="c" style="left:508px;top:558px;width:71px;height:27px;line-height:27px;color:#000000;">平手</div>
<div class="c" style="left:581px;top:558px;width:35px;height:27px;line-height:27px;color:#2a2a2a;">0.85</div>
<div class="c" style="left:617px;top:558px;width:55px;height:27px;line-height:27px;color:#2a2a2a;">2.88</div>
<div class="c" style="left:673px;top:558px;width:56px;height:27px;line-height:27px;color:#2a2a2a;">3.37</div>
<div class="c" style="left:730px;top:558px;width:56px;height:27px;line-height:27px;color:#2a2a2a;">2.29</div>
<div class="c" style="left:786px;top:558px;width:34px;height:27px;line-height:27px;color:#000000;"><span class="g res">負</span></div>
<div class="c" style="left:821px;top:558px;width:34px;height:27px;line-height:27px;color:#000000;"><span class="g res">輸</span></div>
<div class="c" style="left:856px;top:558px;width:51px;height:27px;line-height:27px;color:#000000;"><span class="r res">大</span></div>
<div style="left:0px;top:584px;width:909px;height:1px;background:#bbbbbb;"></div>
<div style="left:0px;top:585px;width:909px;height:27px;background:#ffffff;"></div>
<div style="left:473px;top:585px;width:144px;height:27px;background:#fdf9f6;"></div>
<div style="left:617px;top:585px;width:170px;height:27px;background:#f0f7fb;"></div>
<div style="left:0px;top:585px;width:64px;height:27px;background:#4a9abb;"></div>
<div class="c" style="left:0px;top:586px;width:64px;height:27px;line-height:27px;color:#fff;">摩尔甲</div>
<div class="c" style="left:65px;top:586px;width:67px;height:27px;line-height:27px;color:#2a2a2a;">25-07-14</div>
<div class="c" style="left:132px;top:586px;width:127px;height:27px;line-height:27px;color:#000000;"><span class="g">舒列夫</span></div>
<div class="c" style="left:261px;top:586px;width:79px;height:27px;line-height:27px;color:#2a2a2a;"><span class="r">1-0</span>(1-0)</div>
<div class="c" style="left:341px;top:586px;width:34px;height:27px;line-height:27px;color:#2a2a2a;">5-0</div>
<div class="c" style="left:375px;top:586px;width:96px;height:27px;line-height:27px;color:#000000;">巴蒂</div>
<div class="c" style="left:473px;top:586px;width:35px;height:27px;line-height:27px;color:#2a2a2a;">0.88</div>
<div class="c" style="left:508px;top:586px;width:71px;height:27px;line-height:27px;color:#000000;">两/两球半</div>
<div class="c" style="left:581px;top:586px;width:35px;height:27px;line-height:27px;color:#2a2a2a;">0.82</div>
<div class="c" style="left:617px;top:586px;width:55px;height:27px;line-height:27px;color:#2a2a2a;">1.10</div>
<div class="c" style="left:673px;top:586px;width:56px;height:27px;line-height:27px;color:#2a2a2a;">6.77</div>
<div class="c" style="left:730px;top:586px;width:56px;height:27px;line-height:27px;color:#2a2a2a;">16.62</div>
<div class="c" style="left:786px;top:586px;width:34px;height:27px;line-height:27px;color:#000000;"><span class="r res">勝</span></div>
<div class="c" style="left:821px;top:586px;width:34px;height:27px;line-height:27px;color:#000000;"><span class="g res">輸</span></div>
<div class="c" style="left:856px;top:586px;width:51px;height:27px;line-height:27px;color:#000000;"><span class="g res">小</span></div>
<div style="left:0px;top:612px;width:909px;height:1px;background:#bbbbbb;"></div>
<div style="left:0px;top:613px;width:909px;height:27px;background:#f0f0f0;"></div>
<div style="left:473px;top:613px;width:144px;height:27px;background:#fdf9f6;"></div>
<div style="left:617px;top:613px;width:170px;height:27px;background:#f0f7fb;"></div>
<div style="left:0px;top:613px;width:64px;height:27px;background:#6c00d8;"></div>
<div class="c" style="left:0px;top:614px;width:64px;height:27px;line-height:27px;color:#fff;">欧罗巴杯</div>
<div class="c" style="left:65px;top:614px;width:67px;height:27px;line-height:27px;color:#2a2a2a;">25-07-11</div>
<div class="c" style="left:132px;top:614px;width:127px;height:27px;line-height:27px;color:#000000;"><span class="g">舒列夫</span></div>
<div class="c" style="left:261px;top:614px;width:79px;height:27px;line-height:27px;color:#2a2a2a;"><span class="r">4-0</span>(2-0)</div>
<div class="c" style="left:341px;top:614px;width:34px;height:27px;line-height:27px;color:#2a2a2a;">4-3</div>
<div class="c" style="left:375px;top:614px;width:96px;height:27px;line-height:27px;color:#000000;">普里什蒂纳</div>
<div class="c" style="left:473px;top:614px;width:35px;height:27px;line-height:27px;color:#2a2a2a;">0.95</div>
<div class="c" style="left:508px;top:614px;width:71px;height:27px;line-height:27px;color:#000000;">一/球半</div>
<div class="c" style="left:581px;top:614px;width:35px;height:27px;line-height:27px;color:#2a2a2a;">0.87</div>
<div class="c" style="left:617px;top:614px;width:55px;height:27px;line-height:27px;color:#2a2a2a;">1.35</div>
<div class="c" style="left:673px;top:614px;width:56px;height:27px;line-height:27px;color:#2a2a2a;">4.56</div>
<div class="c" style="left:730px;top:614px;width:56px;height:27px;line-height:27px;color:#2a2a2a;">8.38</div>
<div class="c" style="left:786px;top:614px;width:34px;height:27px;line-height:27px;color:#000000;"><span class="r res">勝</span></div>
<div class="c" style="left:821px;top:614px;width:34px;height:27px;line-height:27px;color:#000000;"><span class="r res">赢</span></div>
<div class="c" style="left:856px;top:614px;width:51px;height:27px;line-height:27px;color:#000000;"><span class="r res">大</span></div>
<div style="left:0px;top:640px;width:909px;height:1px;background:#bbbbbb;"></div>
<div style="left:0px;top:641px;width:909px;height:27px;background:#ffffff;"></div>
<div style="left:473px;top:641px;width:144px;height:27px;background:#fdf9f6;"></div>
<div style="left:617px;top:641px;width:170px;height:27px;background:#f0f7fb;"></div>
<div style="left:0px;top:641px;width:64px;height:27px;background:#4a9abb;"></div>
<div class="c" style="left:0px;top:642px;width:64px;height:27px;line-height:27px;color:#fff;">摩尔甲</div>
<div class="c" style="left:65px;top:642px;width:67px;height:27px;line-height:27px;color:#2a2a2a;">25-07-06</div>
<div class="c" style="left:132px;top:642px;width:127px;height:27px;line-height:27px;color:#000000;"><span class="nb">1</span>米萨米</div>
<div class="c" style="left:261px;top:642px;width:79px;height:27px;line-height:27px;color:#2a2a2a;"><span class="r">1-2</span>(1-1)</div>
<div class="c" style="left:341px;top:642px;width:34px;height:27px;line-height:27px;color:#2a2a2a;">0-7</div>
<div class="c" style="left:375px;top:642px;width:96px;height:27px;line-height:27px;color:#000000;"><span class="g">舒列夫</span></div>
<div class="c" style="left:473px;top:642px;width:35px;height:27px;line-height:27px;color:#2a2a2a;">0.87</div>
<div class="c" style="left:508px;top:642px;width:71px;height:27px;line-height:27px;color:#000000;"><span class="r">*</span>半/一</div>
<div class="c" style="left:581px;top:642px;width:35px;height:27px;line-height:27px;color:#2a2a2a;">0.83</div>
<div class="c" style="left:617px;top:642px;width:55px;height:27px;line-height:27px;color:#2a2a2a;">4.48</div>
<div class="c" style="left:673px;top:642px;width:56px;height:27px;line-height:27px;color:#2a2a2a;">3.36</div>
<div class="c" style="left:730px;top:642px;width:56px;height:27px;line-height:27px;color:#2a2a2a;">1.71</div>
<div class="c" style="left:786px;top:642px;width:34px;height:27px;line-height:27px;color:#000000;"><span class="r res">勝</span></div>
<div class="c" style="left:821px;top:642px;width:34px;height:27px;line-height:27px;color:#000000;"><span class="r res">赢</span></div>
<div class="c" style="left:856px;top:642px;width:51px;height:27px;line-height:27px;color:#000000;"><span class="r res">大</span></div>
<div style="left:0px;top:668px;width:909px;height:1px;background:#bbbbbb;"></div>
<div style="left:0px;top:669px;width:909px;height:27px;background:#f0f0f0;"></div>
<div style="left:473px;top:669px;width:144px;height:27px;background:#fdf9f6;"></div>
<div style="left:617px;top:669px;width:170px;height:27px;background:#f0f7fb;"></div>
<div style="left:0px;top:669px;width:64px;height:27px;background:#4a9abb;"></div>
<div class="c" style="left:0px;top:670px;width:64px;height:27px;line-height:27px;color:#fff;">摩尔甲</div>
<div class="c" style="left:65px;top:670px;width:67px;height:27px;line-height:27px;color:#2a2a2a;">25-06-29</div>
<div class="c" style="left:132px;top:670px;width:127px;height:27px;line-height:27px;color:#000000;"><span class="g">舒列夫</span></div>
<div class="c" style="left:261px;top:670px;width:79px;height:27px;line-height:27px;color:#2a2a2a;"><span class="r">5-1</span>(3-0)</div>
<div class="c" style="left:341px;top:670px;width:34px;height:27px;line-height:27px;color:#2a2a2a;">11-3</div>
<div class="c" style="left:375px;top:670px;width:96px;height:27px;line-height:27px;color:#000000;">斯巴达瑟拉梅</div>
<div class="c" style="left:473px;top:670px;width:35px;height:27px;line-height:27px;color:#2a2a2a;">0.87</div>
<div class="c" style="left:508px;top:670px;width:71px;height:27px;line-height:27px;color:#000000;">四球半/五</div>
<div class="c" style="left:581px;top:670px;width:35px;height:27px;line-height:27px;color:#2a2a2a;">0.83</div>
<div class="c" style="left:617px;top:670px;width:55px;height:27px;line-height:27px;color:#2a2a2a;">1.02</div>
<div class="c" style="left:673px;top:670px;width:56px;height:27px;line-height:27px;color:#2a2a2a;">18.79</div>
<div class="c" style="left:730px;top:670px;width:56px;height:27px;line-height:27px;color:#2a2a2a;">35.44</div>
<div class="c" style="left:786px;top:670px;width:34px;height:27px;line-height:27px;color:#000000;"><span class="r res">勝</span></div>
<div class="c" style="left:821px;top:670px;width:34px;height:27px;line-height:27px;color:#000000;"><span class="g res">輸</span></div>
<div class="c" style="left:856px;top:670px;width:51px;height:27px;line-height:27px;color:#000000;"><span class="r res">大</span></div>
<div style="left:0px;top:696px;width:909px;height:1px;background:#bbbbbb;"></div>
<div style="left:0px;top:697px;width:909px;height:27px;background:#ffffff;"></div>
<div style="left:473px;top:697px;width:144px;height:27px;background:#fdf9f6;"></div>
<div style="left:617px;top:697px;width:170px;height:27px;background:#f0f7fb;"></div>
<div style="left:0px;top:697px;width:64px;height:27px;background:#4a9abb;"></div>
<div class="c" style="left:0px;top:698px;width:64px;height:27px;line-height:27px;color:#fff;">摩尔甲</div>
<div class="c" style="left:65px;top:698px;width:67px;height:27px;line-height:27px;color:#2a2a2a;">25-06-22</div>
<div class="c" style="left:132px;top:698px;width:127px;height:27px;line-height:27px;color:#000000;">萨克森加吉兹</div>
<div class="c" style="left:261px;top:698px;width:79px;height:27px;line-height:27px;color:#2a2a2a;"><span class="r">0-4</span>(0-2)</div>
<div class="c" style="left:341px;top:698px;width:34px;height:27px;line-height:27px;color:#2a2a2a;">4-4</div>
<div class="c" style="left:375px;top:698px;width:96px;height:27px;line-height:27px;color:#000000;"><span class="g">舒列夫</span></div>
<div class="c" style="left:617px;top:698px;width:55px;height:27px;line-height:27px;color:#2a2a2a;">24.21</div>
<div class="c" style="left:673px;top:698px;width:56px;height:27px;line-height:27px;color:#2a2a2a;">10.61</div>
<div class="c" style="left:730px;top:698px;width:56px;height:27px;line-height:27px;color:#2a2a2a;">1.05</div>
<div class="c" style="left:786px;top:698px;width:34px;height:27px;line-height:27px;color:#000000;"><span class="r res">勝</span></div>
<div style="left:0px;top:724px;width:909px;height:1px;background:#bbbbbb;"></div>
<div style="left:0px;top:725px;width:909px;height:27px;background:#f0f0f0;"></div>
<div style="left:473px;top:725px;width:144px;height:27px;background:#fdf9f6;"></div>
<div style="left:617px;top:725px;width:170px;height:27px;background:#f0f7fb;"></div>
<div style="left:0px;top:725px;width:64px;height:27px;background:#357c0e;"></div>
<div class="c" style="left:0px;top:726px;width:64px;height:27px;line-height:27px;color:#fff;">摩尔杯</div>
<div class="c" style="left:65px;top:726px;width:67px;height:27px;line-height:27px;color:#2a2a2a;">25-05-25</div>
<div class="c" style="left:132px;top:726px;width:127px;height:27px;line-height:27px;color:#000000;"><span class="g">舒列夫</span></div>
<div class="c" style="left:261px;top:726px;width:79px;height:27px;line-height:27px;color:#2a2a2a;"><span class="r">2-1</span>(0-0)</div>
<div class="c" style="left:341px;top:726px;width:34px;height:27px;line-height:27px;color:#2a2a2a;">9-3</div>
<div class="c" style="left:375px;top:726px;width:96px;height:27px;line-height:27px;color:#000000;">米萨米<span class="nb">2</span></div>
<div class="c" style="left:617px;top:726px;width:55px;height:27px;line-height:27px;color:#2a2a2a;">1.49</div>
<div class="c" style="left:673px;top:726px;width:56px;height:27px;line-height:27px;color:#2a2a2a;">3.74</div>
<div class="c" style="left:730px;top:726px;width:56px;height:27px;line-height:27px;color:#2a2a2a;">6.16</div>
<div class="c" style="left:786px;top:726px;width:34px;height:27px;line-height:27px;color:#000000;"><span class="r res">勝</span></div>
<div style="left:0px;top:752px;width:909px;height:1px;background:#bbbbbb;"></div>
<div style="left:64px;top:472px;width:1px;height:281px;background:#bbbbbb;"></div>
<div style="left:132px;top:472px;width:1px;height:281px;background:#bbbbbb;"></div>
<div style="left:260px;top:472px;width:1px;height:281px;background:#bbbbbb;"></div>
<div style="left:340px;top:472px;width:1px;height:281px;background:#bbbbbb;"></div>
<div style="left:375px;top:472px;width:1px;height:281px;background:#bbbbbb;"></div>
<div style="left:472px;top:472px;width:1px;height:281px;background:#bbbbbb;"></div>
<div style="left:508px;top:472px;width:1px;height:281px;background:#bbbbbb;"></div>
<div style="left:580px;top:472px;width:1px;height:281px;background:#bbbbbb;"></div>
<div style="left:616px;top:472px;width:1px;height:281px;background:#bbbbbb;"></div>
<div style="left:672px;top:472px;width:1px;height:281px;background:#bbbbbb;"></div>
<div style="left:729px;top:472px;width:1px;height:281px;background:#bbbbbb;"></div>
<div style="left:786px;top:472px;width:1px;height:281px;background:#bbbbbb;"></div>
<div style="left:821px;top:472px;width:1px;height:281px;background:#bbbbbb;"></div>
<div style="left:856px;top:472px;width:1px;height:281px;background:#bbbbbb;"></div>
<div style="left:908px;top:472px;width:1px;height:281px;background:#bbbbbb;"></div></body></html>
